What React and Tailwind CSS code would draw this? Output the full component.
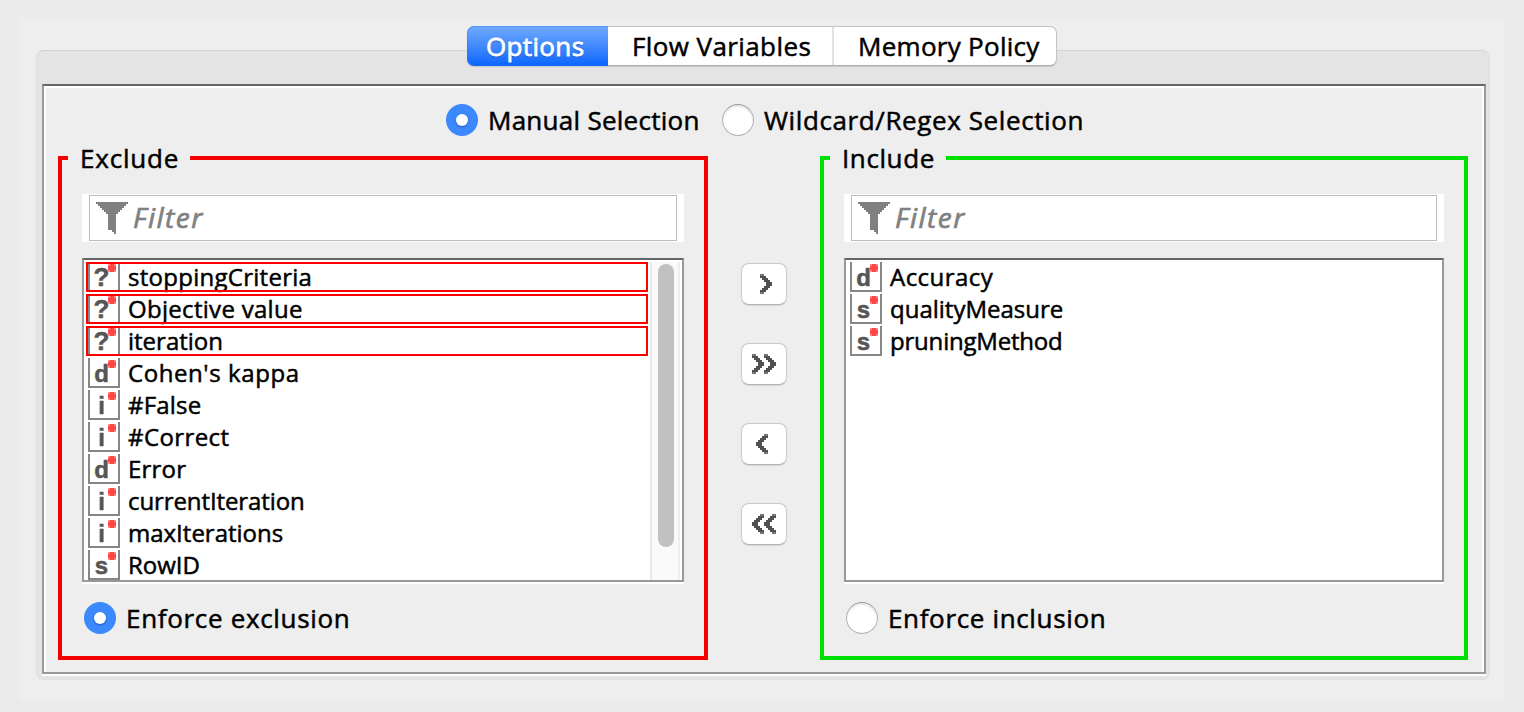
const ARROW_ROWS = [
  [0, 2], [0, 3], [1, 3], [2, 3], [3, 3], [3, 3], [2, 3], [1, 3], [0, 3], [0, 2],
];

function Chevron({ left }) {
  return (
    <svg
      width="12"
      height="20"
      viewBox="0 0 6 10"
      shapeRendering="crispEdges"
      className={left ? "-scale-x-100" : ""}
    >
      {ARROW_ROWS.map(([x, w], y) => (
        <rect key={y} x={x} y={y} width={w} height="1" fill={y === 0 || y === 9 ? "#747474" : "#505050"} />
      ))}
    </svg>
  );
}

function MoveButton({ count = 1, left = false, pad }) {
  return (
    <button
      className={`flex h-[42px] w-[46px] rounded-[8px] border border-[#c9c9c9] border-b-[#b4b4b4] bg-white pt-[10px] shadow-[0_1px_1px_rgba(0,0,0,0.1)] ${pad}`}
    >
      {Array.from({ length: count }, (_, i) => (
        <Chevron key={i} left={left} />
      ))}
    </button>
  );
}

function Radio({ checked, label, tracking }) {
  return (
    <label className="flex h-8 items-center text-[26px] leading-8">
      {checked ? (
        <span className="flex size-8 items-center justify-center rounded-full bg-[#3b89fd]">
          <span className="size-3 rounded-full bg-white shadow-[0_1px_2px_rgba(0,40,130,0.5)]" />
        </span>
      ) : (
        <span className="size-8 rounded-full border border-[#b4b4b4] border-t-[#9a9a9a] bg-white shadow-[inset_0_2px_2px_rgba(0,0,0,0.1)]" />
      )}
      <span className={`whitespace-nowrap ${tracking}`}>{label}</span>
    </label>
  );
}

const GLYPH_STYLES = {
  "?": "text-[26px] leading-[30px]",
  d: "text-[24px] leading-[31px]",
  i: "text-[24px] leading-[31px]",
  s: "text-[24px] leading-[32px]",
};

function TypeIcon({ type }) {
  return (
    <span
      className={`relative flex h-[30px] w-8 shrink-0 justify-center border-x-2 border-b-2 border-[#868686] bg-white pr-[5px] font-['Liberation_Sans',sans-serif] font-bold text-[#555] ${GLYPH_STYLES[type]}`}
    >
      {type}
      <svg width="8" height="8" viewBox="0 0 8 8" shapeRendering="crispEdges" className="absolute top-[2px] right-[2px]">
        <path d="M0 0h8v8h-8z" fill="#ff8a8a" />
        <path d="M2 0h4v2h2v4h-2v2h-4v-2h-2v-4h2z" fill="#ff4646" />
      </svg>
    </span>
  );
}

function Row({ type, label, tracking, missing }) {
  return (
    <div className="relative flex h-[30px] shrink-0 pl-[2px]">
      <TypeIcon type={type} />
      <span className={`ml-2 text-[24px] leading-[30px] whitespace-nowrap ${tracking}`}>{label}</span>
      {missing && <span className="absolute inset-0 border-2 border-[#ff0000]" />}
    </div>
  );
}

function FilterField() {
  return (
    <div className="h-12 bg-white px-[7px] py-px">
      <div className="flex h-[46px] items-center border border-[#bdbdbd] pl-[6px]">
        <svg width="32" height="32" viewBox="0 0 32 32" shapeRendering="crispEdges" className="shrink-0">
          <path d="M0 0h32v2h-2v2h-2v2h-2v2h-2v2h-2v2h-2v20h-2v-2h-2v-2h-4v-16h-2v-2h-2v-2h-2v-2h-2v-2h-2v-2h-2z" fill="#808080" />
        </svg>
        <span className="ml-[5px] pb-[2px] text-[28px] leading-[42px] tracking-[1.5px] text-[#808080] italic [-webkit-text-stroke:0.7px_currentColor]">Filter</span>
      </div>
    </div>
  );
}

function Panel({ title, titleClass, className, rows, scroll, radio }) {
  return (
    <fieldset className={`h-[518px] border-4 ${className}`}>
      <legend className={`ml-[6px] h-8 pl-3 text-[26px] leading-8 whitespace-nowrap ${titleClass}`}>{title}</legend>
      <div className="flex flex-col px-5 pt-5">
        <FilterField />
        <div className="mt-4 flex h-[324px] border-2 border-[#999] border-t-[#666] bg-white shadow-[0_2px_0_#fff]">
          <div className="flex min-w-0 flex-1 flex-col gap-[2px] overflow-hidden pt-[2px] pr-[2px] pl-[2px]">
            {rows.map((r) => (
              <Row key={r.label} {...r} />
            ))}
          </div>
          {scroll && (
            <div className="mt-[2px] mr-[2px] w-[30px] border-x-2 border-l-[#e8e8e8] border-r-[#eeeeee] bg-[#fafafa] px-[6px] pt-[2px]">
              <div className="h-[283px] w-4 rounded-full bg-[#c1c1c1]" />
            </div>
          )}
        </div>
        <div className="mt-5 pl-[2px]">{radio}</div>
      </div>
    </fieldset>
  );
}

const EXCLUDED = [
  { type: "?", label: "stoppingCriteria", tracking: "tracking-[0.27px]", missing: true },
  { type: "?", label: "Objective value", tracking: "tracking-[0.3px]", missing: true },
  { type: "?", label: "iteration", tracking: "tracking-normal", missing: true },
  { type: "d", label: "Cohen's kappa", tracking: "tracking-[0.58px]" },
  { type: "i", label: "#False", tracking: "tracking-[0.2px]" },
  { type: "i", label: "#Correct", tracking: "tracking-[0.4px]" },
  { type: "d", label: "Error", tracking: "tracking-[0.2px]" },
  { type: "i", label: "currentIteration", tracking: "tracking-[-0.1px]" },
  { type: "i", label: "maxIterations", tracking: "tracking-normal" },
  { type: "s", label: "RowID", tracking: "tracking-normal" },
];

const INCLUDED = [
  { type: "d", label: "Accuracy", tracking: "tracking-[0.45px]" },
  { type: "s", label: "qualityMeasure", tracking: "tracking-normal" },
  { type: "s", label: "pruningMethod", tracking: "tracking-[-0.2px]" },
];

export default function App() {
  return (
    <div className="h-[712px] w-[1524px] bg-[#ebebeb] pt-[18px] pl-5 font-['Open_Sans','Noto_Sans',sans-serif] text-black [-webkit-text-stroke:0.5px_currentColor]">
      <div className="h-[682px] w-[1484px] bg-[#eeeeee] px-4 pt-8">
        <div className="h-[630px] w-[1454px] rounded-[8px] border border-[#dedede] border-t-[#d2d2d2] bg-[#e4e4e4] px-[5px]">
          <div className="relative z-10 -mt-[25px] ml-[425px] flex h-10 w-[590px] rounded-[7px] border border-[#c4c4c4] border-b-[#adadad] bg-white text-[26px] leading-[38px] shadow-[0_1px_1px_rgba(0,0,0,0.12)]">
            <div className="-my-px -ml-px h-10 w-[141px] shrink-0 rounded-l-[7px] border border-r-0 border-[#2f7cf0]/40 bg-linear-to-b from-[#6fa9fb] to-[#0264fe] bg-origin-border pl-[18px] leading-[38px] tracking-[0.35px] text-white [-webkit-text-stroke:0.8px_currentColor] [text-shadow:0_1px_1px_rgba(0,30,100,0.6)]">Options</div>
            <div className="w-[226px] shrink-0 border-r-2 border-[#e2e2e2] pl-6 tracking-[0.4px] whitespace-nowrap">Flow Variables</div>
            <div className="pl-6 tracking-[0.28px] whitespace-nowrap">Memory Policy</div>
          </div>
          <div className="mt-[18px] h-[590px] w-[1444px] border-2 border-[#999] border-t-[#666] shadow-[0_2px_0_#fff]">
            <div className="h-[586px] border-x-2 border-t-2 border-white bg-[#eeeeee] px-3 pt-4">
              <div className="flex gap-[22px] pl-[388px]">
                <Radio checked label="Manual Selection" tracking="w-[222px] pl-[10px] tracking-[0.27px]" />
                <Radio label="Wildcard/Regex Selection" tracking="pl-[10px] tracking-[0.6px]" />
              </div>
              <div className="mt-[6px] flex">
                <Panel
                  title="Exclude"
                  titleClass="w-[122px] tracking-[0.8px]"
                  className="w-[650px] border-[#f20000]"
                  rows={EXCLUDED}
                  scroll
                  radio={<Radio checked label="Enforce exclusion" tracking="pl-[10px] tracking-[0.68px]" />}
                />
                <div className="flex w-28 flex-col gap-[38px] pt-[121px] pl-[33px]">
                  <MoveButton pad="pl-[18px]" />
                  <MoveButton count={2} pad="pl-[10px]" />
                  <MoveButton left pad="pl-[14px]" />
                  <MoveButton left count={2} pad="pl-[10px]" />
                </div>
                <Panel
                  title="Include"
                  titleClass="w-[116px] tracking-[0.6px]"
                  className="w-[648px] border-[#00e000]"
                  rows={INCLUDED}
                  radio={<Radio label="Enforce inclusion" tracking="pl-[10px] tracking-[0.65px]" />}
                />
              </div>
            </div>
          </div>
        </div>
      </div>
    </div>
  );
}
